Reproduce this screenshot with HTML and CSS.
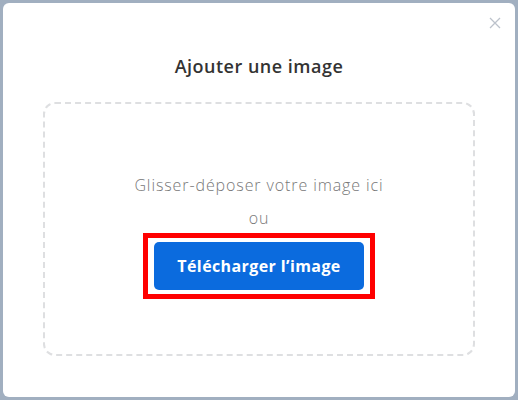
FILE: index.html
```html
<!DOCTYPE html>
<html lang="fr">
<head>
<meta charset="utf-8">
<title>Ajouter une image</title>
<link rel="stylesheet" href="styles.css">
</head>
<body>
<div class="modal">
  <button class="close" aria-label="Fermer">
    <svg width="12" height="12" viewBox="0 0 12 12"><path d="M1 1L11 11M11 1L1 11" stroke="#bcc2cb" stroke-width="1.3" fill="none"/></svg>
  </button>
  <h2 class="title">Ajouter une image</h2>
  <div class="dropzone">
    <p class="hint">Glisser-déposer votre image ici</p>
    <p class="or">ou</p>
    <span class="highlight"><button class="upload">Télécharger l’image</button></span>
  </div>
</div>
</body>
</html>
```
FILE: styles.css
```css
* { box-sizing: border-box; }
html, body { margin: 0; height: 100%; }
body {
  background: #a1afc0;
  font-family: "Open Sans", "DejaVu Sans", sans-serif;
  padding: 3px;
}
.modal {
  position: relative;
  background: #fff;
  border-radius: 6px;
  height: 394px;
  padding: 43px 40px 0;
}
.close {
  position: absolute;
  top: 11px;
  right: 11px;
  width: 18px;
  height: 18px;
  padding: 0;
  border: 0;
  background: none;
  display: flex;
  align-items: center;
  justify-content: center;
}
.title {
  margin: 0;
  text-align: center;
  font-size: 18px;
  font-weight: 600;
  letter-spacing: 0.5px;
  color: #333;
  line-height: 40px;
}
.dropzone {
  margin-top: 16px;
  height: 254px;
  border: 2px dashed #dedfe1;
  border-radius: 12px;
  display: flex;
  flex-direction: column;
  align-items: center;
  padding-top: 69px;
}
.hint {
  margin: 0;
  font-size: 16px;
  font-weight: 300;
  letter-spacing: 0.9px;
  color: #777;
  line-height: 24px;
}
.or {
  margin: 9px 0 0;
  font-size: 16px;
  font-weight: 300;
  letter-spacing: 0.9px;
  color: #777;
  line-height: 24px;
}
.highlight {
  margin-top: 3px;
  border: 5px solid #f00;
  padding: 4px 6px;
  display: flex;
}
.upload {
  width: 210px;
  height: 48px;
  border: 0;
  border-radius: 5px;
  background: #0b6bde;
  color: #fff;
  font-family: inherit;
  font-size: 16px;
  font-weight: 700;
  letter-spacing: 0.4px;
}
```
